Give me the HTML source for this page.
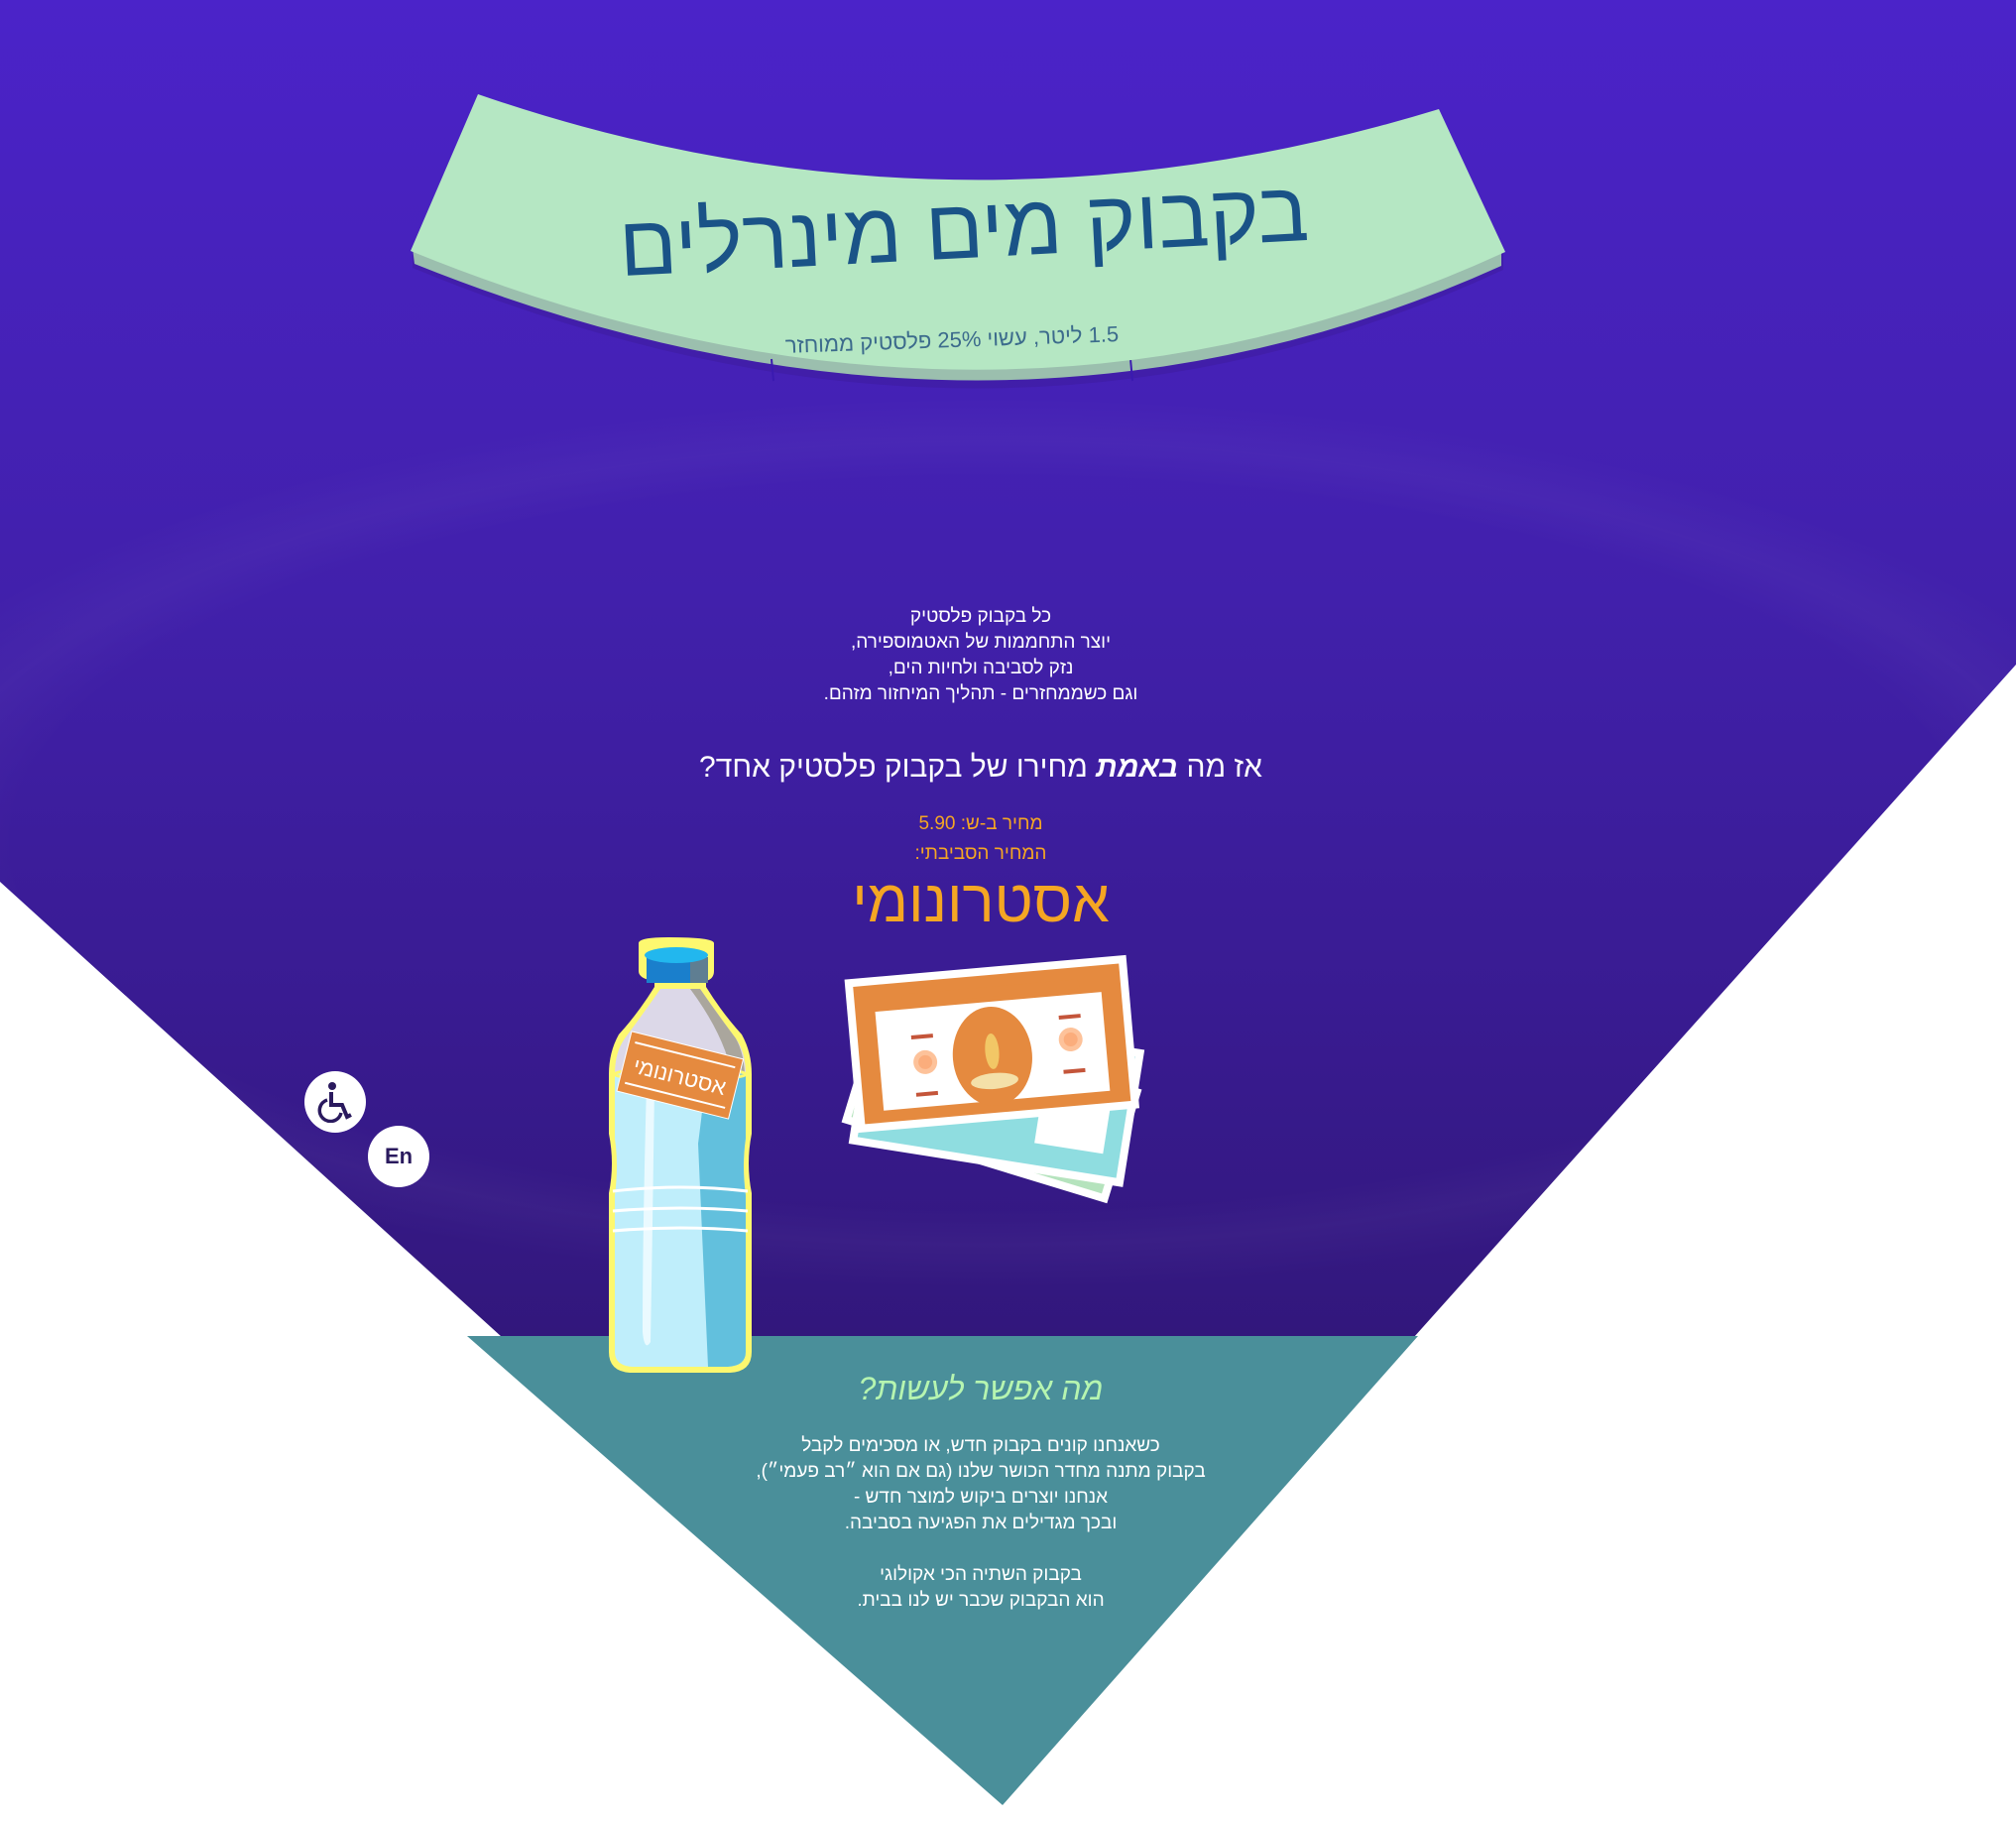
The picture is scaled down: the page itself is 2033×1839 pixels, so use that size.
<!DOCTYPE html>
<html><head><meta charset="utf-8">
<style>
html,body{margin:0;padding:0;}
body{width:2033px;height:1839px;position:relative;overflow:hidden;background:#fff;font-family:"Liberation Sans","DejaVu Sans",sans-serif;direction:rtl;}
.abs{position:absolute;}
.c{position:absolute;left:0;width:1978px;text-align:center;white-space:nowrap;}
</style></head><body>
<svg class="abs" style="left:0;top:0" width="2033" height="1839" viewBox="0 0 2033 1839">
<defs>
<linearGradient id="bg" x1="0" y1="0" x2="0" y2="1">
<stop offset="0" stop-color="#4b23c9"/><stop offset="0.45" stop-color="#4120ab"/><stop offset="1" stop-color="#32177c"/>
</linearGradient>
<radialGradient id="glow" cx="0.5" cy="0.5" r="0.5">
<stop offset="0.82" stop-color="#ffffff" stop-opacity="0"/><stop offset="0.9" stop-color="#ffffff" stop-opacity="0.03"/><stop offset="1" stop-color="#ffffff" stop-opacity="0"/>
</radialGradient>
</defs>
<polygon points="0,0 2033,0 2033,670 1426,1348 506,1348 0,889" fill="url(#bg)"/>
<ellipse cx="1000" cy="850" rx="1200" ry="450" fill="url(#glow)"/>
<polygon points="471,1347 1430,1347 1011,1820" fill="#4a8f9a"/>
<!-- pages under banner -->
<path d="M416,250 L416,270 Q1000,512 1516,272 L1516,250 Z" fill="#3b1a9a" opacity="0.45"/>
<path d="M416,250 L418,266 Q1000,500 1514,268 L1514,250 Z" fill="#9bbfae"/>
<path d="M440,252 Q1000,480 1505,255 L1500,250 Q1000,470 445,250 Z" fill="#cfc9d9"/>
<path d="M460,262 Q1000,470 1495,262 L1490,255 Q1000,455 465,255 Z" fill="#cfc9d9"/>
<line x1="778" y1="362" x2="780" y2="384" stroke="#3a1ab0" stroke-width="2"/>
<line x1="1140" y1="362" x2="1142" y2="384" stroke="#3a1ab0" stroke-width="2"/>
<!-- banner -->
<path d="M482,95 Q960,260 1451,110 L1518,254 Q1000,492 414,253 Z" fill="#b5e7c3"/>
</svg>

<div class="abs" style="left:0;top:182px;width:1944px;text-align:center;font-size:86px;color:#1a5387;transform:rotate(-3deg);white-space:nowrap;">בקבוק מים מינרלים</div>
<div class="abs" style="left:0;top:330px;width:1920px;text-align:center;font-size:22px;color:#3c6b8c;transform:rotate(-2deg);white-space:nowrap;">1.5 ליטר, עשוי 25% פלסטיק ממוחזר</div>

<div class="c" style="top:609px;font-size:19px;line-height:26px;color:#fff;">כל בקבוק פלסטיק<br>יוצר התחממות של האטמוספירה,<br>נזק לסביבה ולחיות הים,<br>וגם כשממחזרים - תהליך המיחזור מזהם.</div>
<div class="c" style="top:757px;font-size:30px;color:#fff;">אז מה <b><i>באמת</i></b> מחירו של בקבוק פלסטיק אחד?</div>
<div class="c" style="top:820px;font-size:19px;color:#f5a623;">מחיר ב-ש: 5.90</div>
<div class="c" style="top:850px;font-size:19px;color:#f5a623;">המחיר הסביבתי:</div>
<div class="c" style="top:874px;font-size:60px;color:#f5a623;">אסטרונומי</div>

<!-- bottle -->
<svg class="abs" style="left:608px;top:943px" width="156" height="446" viewBox="0 0 156 446">
<path d="M36,8 Q36,2 66,2 Q112,2 112,8 L112,36 Q112,44 104,46 L104,52 Q120,78 140,100 Q150,118 150,140 L150,200 Q144,230 150,260 L150,420 Q150,440 128,441 L28,441 Q6,440 6,420 L6,260 Q12,230 6,200 L6,140 Q6,118 16,100 Q36,78 52,52 L52,46 Q36,44 36,36 Z" fill="#fdf86f"/>
<path d="M58,54 Q40,80 22,104 Q12,118 12,140 L12,205 L144,205 L144,140 Q144,118 134,104 Q116,80 98,54 Z" fill="#dcd8e8"/>
<path d="M98,54 Q116,80 134,104 Q142,118 143,140 L130,140 Q122,100 88,54 Z" fill="#aaa69d"/>
<path d="M12,140 Q78,130 144,140 L144,205 Q140,232 144,262 L144,420 Q144,434 126,435 L30,435 Q12,434 12,420 L12,262 Q16,232 12,205 Z" fill="#bfeefb"/>
<path d="M104,140 Q124,138 144,140 L144,205 Q140,232 144,262 L144,420 Q144,434 126,435 L106,435 Q100,300 96,210 Q100,180 104,140 Z" fill="#62c0dd"/>
<path d="M44,150 L52,150 Q50,300 48,410 Q42,420 40,400 Q40,300 44,150 Z" fill="#eafaff"/>
<ellipse cx="78" cy="140" rx="66" ry="6" fill="none" stroke="#fdf86f" stroke-width="3"/>
<path d="M10,258 Q78,250 146,258 M10,278 Q78,272 146,278 M10,298 Q78,292 146,298" stroke="#fff" stroke-width="3" fill="none"/>
<rect x="44" y="22" width="62" height="26" fill="#1a7fcc"/>
<rect x="88" y="22" width="18" height="26" fill="#5f7e92"/>
<ellipse cx="74" cy="20" rx="32" ry="8" fill="#22b7ee"/>
<g transform="rotate(14 78 140)">
<rect x="20" y="110" width="116" height="62" fill="#e58a3f" stroke="#fff" stroke-width="1"/>
<line x1="26" y1="120" x2="130" y2="120" stroke="#fff" stroke-width="2"/>
<line x1="26" y1="162" x2="130" y2="162" stroke="#fff" stroke-width="2"/>
<text x="78" y="150" font-size="22" fill="#fff" text-anchor="middle" font-family="Liberation Sans,sans-serif">אסטרונומי</text>
</g>
</svg>

<!-- bills -->
<svg class="abs" style="left:840px;top:955px" width="320" height="280" viewBox="0 0 320 280">
<g transform="rotate(17 160 160)"><rect x="20" y="100" width="280" height="120" fill="#fff"/><rect x="28" y="108" width="264" height="104" fill="#b5e3bd"/><path d="M120,180 L200,190 L180,200 Z" fill="#3c8a3f"/></g>
<g transform="rotate(9 160 150)"><rect x="25" y="80" width="280" height="140" fill="#fff"/><rect x="33" y="88" width="264" height="124" fill="#8fdde0"/><rect x="60" y="100" width="60" height="80" fill="#fff"/><rect x="210" y="100" width="70" height="90" fill="#fff"/><circle cx="240" cy="130" r="12" fill="#9fd5e0"/></g>
<g transform="rotate(-5 160 100)"><rect x="18" y="20" width="285" height="155" fill="#fff"/><rect x="26" y="28" width="269" height="139" fill="#e58a3f"/>
<rect x="46" y="55" width="229" height="100" fill="#fff"/><rect x="74" y="40" width="180" height="10" rx="5" fill="#e58a3f"/>
<ellipse cx="160" cy="110" rx="40" ry="50" fill="#e58a3f"/><ellipse cx="160" cy="105" rx="7" ry="18" fill="#f2c766"/><ellipse cx="160" cy="135" rx="24" ry="8" fill="#f4e0a8"/>
<circle cx="92" cy="110" r="12" fill="#fdc29a"/><circle cx="92" cy="110" r="7" fill="#fbad7c"/><circle cx="240" cy="100" r="12" fill="#fdc29a"/><circle cx="240" cy="100" r="7" fill="#fbad7c"/>
<rect x="80" y="82" width="22" height="4" fill="#c4553a"/><rect x="80" y="140" width="22" height="4" fill="#c4553a"/><rect x="230" y="75" width="22" height="4" fill="#c4553a"/><rect x="230" y="130" width="22" height="4" fill="#c4553a"/></g>
</svg>

<!-- accessibility buttons -->
<div class="abs" style="left:307px;top:1080px;width:62px;height:62px;border-radius:50%;background:#fff;"></div>
<svg class="abs" style="left:320px;top:1090px" width="38" height="42" viewBox="0 0 38 42"><circle cx="15" cy="5" r="4" fill="#2a1a5e"/><path d="M14,11 L14,24 L25,24 L30,36 L34,34" stroke="#2a1a5e" stroke-width="4" fill="none"/><path d="M10,19 A11,11 0 1 0 24,32" stroke="#2a1a5e" stroke-width="3.5" fill="none"/></svg>
<div class="abs" style="left:371px;top:1135px;width:62px;height:62px;border-radius:50%;background:#fff;color:#2a1a5e;font-weight:bold;font-size:22px;line-height:62px;text-align:center;direction:ltr;">En</div>

<div class="c" style="top:1382px;font-size:32px;color:#b6f5b0;font-style:italic;">מה אפשר לעשות?</div>
<div class="c" style="top:1445px;font-size:19px;line-height:26px;color:#fff;">כשאנחנו קונים בקבוק חדש, או מסכימים לקבל<br>בקבוק מתנה מחדר הכושר שלנו (גם אם הוא ״רב פעמי״),<br>אנחנו יוצרים ביקוש למוצר חדש -<br>ובכך מגדילים את הפגיעה בסביבה.<br><br>בקבוק השתיה הכי אקולוגי<br>הוא הבקבוק שכבר יש לנו בבית.</div>
</body></html>
